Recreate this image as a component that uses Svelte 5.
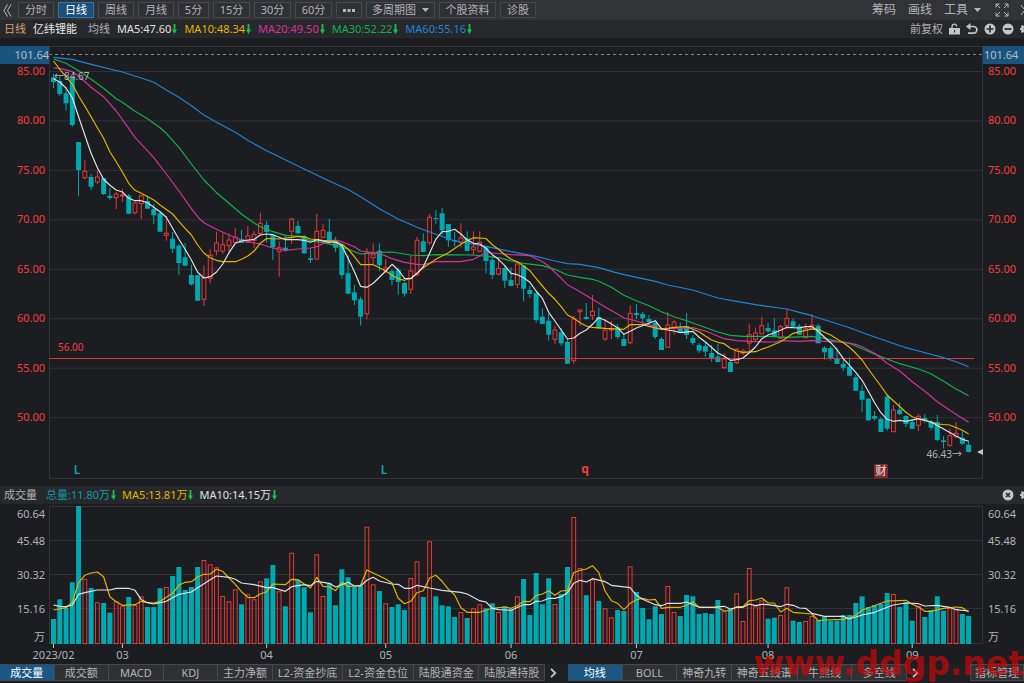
<script lang="ts">
	type Point = [number, number];

	// one row per trading day: high, body top, body bottom, low, rising, volume top
	// all in plot units, see the two viewBoxes below
	const days = [
		[74, 77.3, 82, 88, 0, 619], [76, 81, 94, 96, 0, 599.3], [87.3, 93.3, 103.3, 110.7, 0, 608],
		[76, 78.3, 125, 126.7, 0, 582.3], [142, 142, 170, 196, 0, 506], [160, 171.3, 177.7, 179.3, 1, 579],
		[174, 177, 186.7, 190, 0, 588], [170.7, 177, 182, 184, 1, 602.3], [178, 178, 194, 195, 0, 603],
		[188, 195.7, 198, 199.7, 0, 612.7], [191.7, 194, 197.7, 209, 1, 601.3], [189, 195, 196, 202, 1, 605.7],
		[194, 195.7, 213.7, 214, 0, 597], [201, 203, 212.7, 214.7, 1, 605], [195, 195.7, 203.7, 219, 1, 596.3],
		[195.7, 201, 208.7, 208.7, 0, 607], [204, 209, 215.3, 224, 0, 607], [212, 213.3, 231.7, 232, 0, 588.3],
		[216, 233.3, 235.3, 240.7, 1, 587], [232, 238.7, 248.7, 253, 0, 576], [244, 245.7, 263, 274.7, 0, 567],
		[243.3, 257.3, 265.7, 266, 0, 590], [264.7, 275, 284.3, 285.7, 0, 587], [275, 275.3, 300.7, 301, 0, 567],
		[265.3, 278, 299.3, 306, 1, 560], [249.3, 255.3, 278.3, 283.3, 1, 564.3], [231.7, 243, 251, 255.3, 1, 567.3],
		[233.3, 244.7, 251, 254, 1, 596], [233.3, 240, 245.7, 254, 1, 601.3], [228, 237.3, 242.3, 243.3, 1, 589.3],
		[229.7, 239, 243, 243, 0, 604.3], [226, 236, 242.3, 242.3, 1, 594.3], [231, 234.3, 240.3, 248, 1, 599.3],
		[212.7, 223.3, 233.3, 235.3, 1, 581.3], [221, 225, 232, 242.7, 0, 578.3], [234, 234.7, 247.3, 260, 0, 565],
		[241.3, 247.7, 251.7, 276.7, 1, 591.3], [234.7, 247.7, 250.3, 251.7, 0, 606.3], [218, 219, 231.3, 244, 1, 552.7],
		[221, 226, 233.3, 234, 0, 580], [235, 236, 253.3, 254, 0, 587.3], [248.3, 258.3, 260, 263, 0, 612.3],
		[214, 231.3, 259, 259.3, 1, 554.3], [224, 230.3, 237.3, 238.3, 1, 596], [218.7, 231.7, 241.7, 243.3, 0, 583],
		[237, 240.3, 247.7, 252.3, 0, 605.3], [244, 244.3, 275, 278.7, 0, 569.3], [255.3, 273.3, 293.7, 293.7, 0, 577.3],
		[285, 292.3, 300.3, 305, 0, 587], [296.7, 299.3, 316.7, 325.7, 0, 586], [248.3, 253.3, 313.7, 319.3, 1, 526.7],
		[243.3, 254.3, 257.7, 264.3, 1, 584.3], [243.3, 250.7, 265.3, 271.3, 0, 591], [259.3, 268, 270, 273.3, 1, 603.3],
		[269.3, 271, 280, 285.3, 0, 607], [267.7, 270, 282, 294.7, 0, 604.3], [282, 283, 293.7, 296.7, 0, 610],
		[255, 271, 289.3, 294, 1, 578], [236.7, 240.3, 274.7, 276.7, 1, 561.3], [233.3, 241.3, 252, 252, 0, 597],
		[214, 217.3, 242.7, 245, 1, 541.3], [210, 218, 219, 224, 0, 596.3], [208, 213.3, 230.3, 235.3, 0, 605.3],
		[224, 224, 240.3, 246.7, 0, 606.3], [232, 240, 241.3, 246.7, 0, 617], [223.3, 238, 242.3, 247.3, 1, 612],
		[231.3, 238.3, 251, 251, 0, 618], [231.3, 247, 249.7, 255.3, 1, 608.3], [231.3, 242.3, 251.3, 252.3, 1, 604.3],
		[246, 246, 261, 273.3, 0, 608.3], [256.7, 260, 275, 279, 0, 603.3], [258.3, 268.3, 274, 275.7, 1, 612],
		[265.3, 268, 280.7, 288, 0, 606.3], [267.3, 280, 286, 286, 0, 609.3], [261.7, 264, 284.3, 288, 1, 596.3],
		[265, 265.7, 288.7, 301.3, 0, 579], [286, 290, 294, 297.7, 0, 615], [292, 293.3, 320, 322.7, 0, 573],
		[308.3, 316.7, 324, 324, 0, 604.3], [314, 320.7, 334.7, 340.7, 0, 578.3], [325.7, 330, 339.3, 344, 1, 604],
		[328, 332.3, 343.3, 345.7, 0, 594], [339.3, 342, 363.7, 364, 0, 567], [316, 319, 360.7, 363.7, 1, 517],
		[309, 310, 311.7, 326, 1, 568], [303, 317, 319, 319.7, 0, 595.3], [295, 311.3, 315.7, 320, 1, 579.3],
		[307.7, 317, 328.3, 328.3, 0, 601], [319, 330, 339, 340.7, 1, 608.3], [321, 329, 330, 339, 1, 617.3],
		[324, 327.3, 337, 339, 0, 610], [334, 339, 346, 346, 0, 611], [305.3, 313.3, 342.7, 344, 1, 566.3],
		[304, 313, 315, 319, 0, 592], [312, 314, 318.3, 325.3, 0, 608], [315, 319, 322.3, 324, 0, 619.3],
		[322, 322.7, 337, 339, 0, 606.3], [337, 339, 350, 350, 0, 614], [312, 325, 347.3, 347.7, 1, 586],
		[320.3, 322, 327.7, 335, 1, 612], [322.7, 327.7, 332.7, 333, 0, 616], [313, 326, 335, 339, 0, 595],
		[335, 338, 343, 345, 0, 596.3], [343, 345, 350.7, 353, 0, 614], [343, 346, 351.7, 356.7, 0, 613],
		[345, 353, 358, 361.7, 0, 614], [344, 356.7, 362, 362, 0, 600], [353.3, 359, 367.7, 368.7, 1, 611.3],
		[360, 362, 372, 372, 0, 609], [348, 349.3, 362.7, 364, 1, 593.3], [348.7, 351, 353, 355, 1, 621],
		[323.7, 334.7, 343, 351.7, 1, 568], [327.7, 333, 339.3, 341.7, 1, 606.3], [316.7, 325.7, 333.7, 334, 1, 600.3],
		[322.7, 328, 331.3, 332.7, 0, 618.7], [318, 330.3, 336.7, 336.7, 0, 617.7], [325, 326.7, 338.3, 338.7, 1, 615],
		[309.7, 318.3, 325.7, 329.3, 1, 587.3], [318.3, 321.3, 326.7, 328, 0, 620.7], [324, 326, 334.7, 335, 0, 622],
		[323.7, 328.7, 337.7, 338, 1, 621], [314, 325.3, 329.3, 330, 1, 616], [323.7, 325.7, 343.3, 343.3, 0, 620],
		[346.3, 347.7, 352.3, 359.7, 0, 616.7], [346, 348, 358.7, 360.7, 0, 620.7], [347.7, 358.3, 364, 364, 0, 620.7],
		[359, 364, 367.7, 371, 0, 615], [357, 366.7, 375.7, 375.7, 0, 615], [375, 377.3, 390.7, 391, 0, 603],
		[385, 391, 399.7, 411.7, 0, 596.3], [398, 398.7, 420.3, 420.7, 0, 607], [411, 416, 418.7, 420.7, 0, 605],
		[417.3, 419, 432, 432, 0, 604], [394.3, 396.7, 428.7, 430.7, 0, 593], [405, 410, 431.7, 432, 1, 594],
		[402.3, 409.7, 414, 415, 0, 607], [415.3, 416, 424, 427, 0, 602], [419, 422, 428.7, 429, 0, 620.7],
		[414.3, 416.3, 425.3, 431, 1, 606], [414.3, 418, 420.7, 422.7, 0, 617], [420, 421.3, 427.7, 430.3, 0, 610],
		[415, 422, 440, 440.7, 0, 596.3], [436, 440.3, 442, 448.3, 0, 610.7], [428.7, 435.7, 445.3, 447, 1, 608],
		[422, 433.3, 436.7, 438, 1, 609], [431.3, 437.7, 443.7, 444.7, 0, 614], [440.7, 444.7, 452, 452.7, 0, 616]
	];

	// averages as [day, y] knots, straight in between
	const priceLines: { name: string; points: Point[] }[] = [
		{
			name: 'ma60',
			points: [[0, 57.3], [3, 59.3], [6, 64.3], [11, 72], [14, 78], [16, 82.3], [18, 90], [20, 97.3], [22, 105.7], [24, 115], [26, 122.3], [29, 132.3], [31, 140.3], [34, 150.7], [36, 156.7], [40, 169], [44, 181], [47, 189.5], [49, 196.7], [52, 208.7], [55, 219], [58, 227.3], [61, 234.3], [64, 241], [69, 246.3], [73, 251.7], [77, 256.3], [80, 261], [82, 263.7], [84, 264.3], [87, 267.7], [89, 271.3], [91, 274.7], [96, 281.3], [98, 285], [102, 290], [106, 298], [109, 301.3], [112, 304.7], [117, 309], [119, 312.3], [121, 315.7], [124, 321.7], [127, 327.7], [130, 334.7], [133, 341.3], [136, 347.7], [138, 351], [142, 357.7], [144, 361.7], [146, 366.7]]
		},
		{
			name: 'ma30',
			points: [[0, 59], [2, 63.3], [4, 70.7], [6, 79.3], [8, 88.3], [10, 98.7], [11, 102.3], [13, 111.3], [15, 118.7], [17, 127.7], [18, 133.3], [20, 147.3], [22, 164], [24, 180], [26, 192.7], [28, 203.3], [30, 214], [32, 223], [33, 226.7], [35, 231.7], [37, 235.3], [39, 236.3], [41, 240.7], [43, 242.7], [45, 245.3], [47, 249.3], [49, 254], [52, 252.3], [54, 252], [57, 255], [59, 255.7], [61, 254.7], [67, 255], [71, 257.7], [73, 261], [75, 263.3], [78, 265.7], [80, 269.3], [82, 275], [84, 277.3], [86, 279.3], [87, 281.3], [89, 287.3], [91, 295.3], [93, 300.7], [95, 305.7], [97, 311.7], [99, 316.7], [101, 320.7], [103, 325.3], [106, 332], [108, 335.3], [110, 336.3], [114, 336.3], [117, 337.3], [121, 336.3], [123, 338.3], [125, 341.3], [127, 343.3], [129, 348.7], [131, 354], [133, 359], [135, 363.7], [138, 369], [140, 373.7], [142, 381.3], [144, 389], [146, 395.7]]
		},
		{
			name: 'ma20',
			points: [[0, 68], [1, 68.3], [3, 71.7], [4, 76], [6, 87.3], [8, 96.7], [10, 111], [12, 128.3], [13, 137.3], [16, 157.7], [18, 174], [20, 191], [22, 208.7], [23, 216.7], [24, 222.7], [26, 229.3], [28, 235], [30, 240], [32, 243], [33, 244], [35, 248], [37, 250.3], [39, 249], [41, 248], [42, 246.7], [43, 243.7], [44, 240.7], [45, 240], [46, 241.7], [48, 246.7], [49, 251], [52, 253.3], [54, 258.7], [56, 262.3], [58, 264.3], [59, 264.7], [61, 261.7], [65, 261.7], [67, 259.3], [68, 256], [69, 252.3], [70, 253], [73, 254.7], [76, 255.7], [78, 261.7], [79, 266], [80, 272.3], [81, 278.3], [82, 284.7], [84, 291.7], [86, 299.3], [88, 307], [90, 314], [91, 318], [93, 321], [95, 324.7], [97, 329], [99, 328.3], [102, 327.7], [104, 331], [107, 338.7], [109, 340.7], [112, 341.7], [115, 342], [116, 340.7], [119, 341.3], [121, 340.7], [123, 341.3], [126, 342], [128, 344.3], [129, 346.7], [131, 353.3], [133, 363.3], [135, 371], [137, 381.7], [139, 391.3], [141, 401.7], [143, 410.3], [146, 422.3]]
		},
		{
			name: 'ma10',
			points: [[0, 61], [1, 69.3], [2, 76.7], [3, 84.3], [4, 96], [5, 106], [6, 116.7], [7, 127.7], [8, 138.3], [9, 151.7], [10, 161.7], [11, 172], [12, 183.3], [13, 190.3], [14, 193.3], [16, 200], [17, 205], [19, 214], [20, 221.3], [21, 228.3], [22, 235], [23, 245], [24, 253], [25, 257.7], [26, 260.3], [27, 261.7], [29, 261.7], [30, 259.3], [31, 256], [32, 251], [33, 243.3], [34, 238.5], [36, 239], [38, 237.3], [39, 236.3], [40, 236.7], [41, 239], [43, 240.3], [45, 241.3], [46, 244.3], [47, 249], [48, 256.7], [49, 264.7], [51, 264.7], [52, 267.7], [53, 271], [54, 275.3], [55, 278.7], [56, 280.3], [57, 278.3], [58, 273.3], [59, 267.7], [61, 259.3], [63, 252.7], [65, 244.3], [66, 240.7], [67, 237.7], [69, 238.5], [70, 244.7], [71, 249.3], [72, 254.7], [73, 259.3], [74, 261.7], [75, 266], [76, 270.7], [77, 278.3], [78, 286], [79, 293.3], [80, 299.3], [81, 306.7], [82, 315], [83, 318.3], [84, 322.7], [85, 326], [86, 327.3], [88, 328.3], [91, 329.3], [92, 324.7], [94, 324.7], [95, 326.3], [97, 329.3], [99, 327.3], [101, 326.7], [103, 331.7], [104, 336], [105, 340], [106, 342.3], [107, 343.7], [108, 348.3], [109, 351], [110, 352.3], [112, 351.7], [113, 349.3], [114, 347], [116, 341.7], [117, 337.7], [118, 333.3], [120, 330.3], [121, 329], [122, 329.3], [123, 332.3], [124, 335], [125, 339], [126, 342.7], [127, 347.3], [128, 353.3], [129, 360], [130, 369], [132, 386], [133, 395], [134, 400.7], [136, 412.3], [137, 416.7], [138, 419], [139, 420.3], [140, 422.3], [141, 424], [143, 425], [145, 430.3], [146, 434]]
		},
		{
			name: 'ma5',
			points: [[0, 78.7], [1, 82], [2, 88], [3, 97.7], [4, 116.7], [5, 135], [6, 153.3], [7, 167.7], [8, 179.3], [9, 185.3], [10, 190], [11, 192], [12, 198.3], [13, 200.7], [14, 200.7], [15, 202.7], [16, 207.3], [17, 211.7], [18, 217.3], [19, 228.3], [20, 239.3], [21, 249.3], [22, 260], [23, 272.3], [24, 278], [25, 276.7], [26, 272], [27, 264], [28, 252.7], [29, 243.3], [30, 241], [32, 239.3], [33, 235], [34, 234], [35, 234.7], [37, 239.7], [39, 239.7], [40, 240.3], [41, 242.3], [42, 239.7], [44, 242.3], [45, 242], [46, 245.7], [47, 258.3], [48, 271.7], [49, 286.3], [50, 287.3], [51, 283.3], [52, 277.3], [53, 271], [54, 264.3], [55, 270], [56, 278.3], [57, 278.7], [58, 273.3], [59, 266.7], [60, 253.3], [61, 239.3], [62, 231.7], [63, 231.3], [64, 229.3], [65, 234], [66, 240], [67, 243.3], [68, 244], [69, 248.3], [70, 254.7], [71, 259.3], [72, 265.7], [73, 273.3], [74, 274.7], [75, 277.7], [76, 282.3], [77, 291], [78, 298.3], [79, 312.3], [80, 321], [81, 330], [82, 339], [83, 338], [84, 333.3], [85, 330], [86, 324.3], [87, 317.7], [88, 320.3], [89, 324], [90, 327.7], [91, 334.3], [92, 331.3], [93, 328], [95, 323.3], [96, 320.7], [97, 328.7], [98, 330], [99, 331], [100, 332.7], [102, 331.3], [103, 337.3], [104, 342], [106, 353], [107, 356.3], [108, 360.3], [109, 359.7], [110, 358], [111, 352.7], [112, 347], [113, 338.7], [114, 335], [115, 332.7], [116, 330.3], [117, 327.3], [119, 328], [120, 326.7], [121, 326.7], [122, 331.3], [123, 337.3], [124, 342.7], [125, 349.7], [126, 358.7], [127, 365.3], [128, 372.3], [129, 380.3], [130, 391.3], [131, 402.7], [132, 412.7], [133, 419.3], [134, 421.3], [135, 420.3], [136, 421.3], [138, 418.7], [140, 422], [142, 429], [144, 436], [145, 439.3], [146, 441.3]]
		}
	];

	const volumeLines: { name: string; points: Point[] }[] = [
		{
			name: 'ma10',
			points: [[0, 610], [2, 607.7], [3, 602.3], [4, 582.7], [5, 575.3], [6, 573], [7, 572], [8, 576.7], [9, 596.7], [10, 601.7], [11, 605.3], [13, 604.7], [14, 601.3], [15, 602.7], [16, 603], [17, 601.3], [18, 597.3], [19, 593.3], [20, 585.3], [21, 582.3], [22, 581.7], [23, 577], [24, 574.3], [25, 574], [26, 569.3], [27, 571.3], [28, 578], [29, 584.3], [30, 591.7], [31, 597.3], [32, 597.7], [33, 594], [34, 591.7], [35, 584], [37, 584.7], [38, 579.3], [39, 579.7], [40, 584], [41, 588], [42, 577.3], [43, 586.3], [44, 587], [45, 590.7], [46, 582.3], [47, 586.7], [49, 585.3], [50, 570], [51, 573], [53, 579], [54, 583], [55, 598.3], [56, 603.7], [57, 601.3], [58, 592.7], [59, 590.7], [60, 578], [61, 575.3], [62, 581.3], [63, 589.3], [64, 595], [65, 607.7], [66, 612.3], [68, 612.3], [70, 608.3], [72, 607], [73, 608.3], [74, 605.7], [75, 601.3], [76, 601.7], [77, 595.3], [78, 594], [79, 590.7], [80, 595.3], [81, 591], [82, 590.3], [83, 572.7], [84, 570.3], [85, 569], [86, 565.7], [87, 572.7], [88, 591], [89, 600.7], [90, 603.3], [91, 609.7], [92, 603.3], [93, 599.7], [94, 598.3], [95, 600], [96, 599.3], [97, 608.3], [98, 607.3], [100, 607.3], [101, 605.3], [102, 602], [103, 607], [106, 607.7], [107, 611], [108, 610.3], [109, 606.7], [110, 606.7], [111, 600.7], [112, 600], [113, 598], [114, 603], [115, 603], [116, 612], [117, 608.3], [118, 612.3], [121, 614], [122, 620.7], [123, 620], [126, 619.3], [127, 618], [128, 615], [129, 610.3], [130, 608], [132, 603.3], [133, 601], [136, 600.3], [137, 604.3], [138, 607], [139, 611.3], [140, 611.3], [142, 608.3], [144, 607], [145, 607.7], [146, 612]]
		},
		{
			name: 'ma5',
			points: [[0, 605], [1, 606.3], [2, 606.7], [3, 605], [4, 594.3], [5, 592.7], [7, 590], [9, 590], [10, 588.3], [12, 588.3], [13, 590.3], [14, 599.7], [15, 602.7], [16, 604], [18, 601.3], [20, 594.3], [22, 592], [23, 587.7], [25, 579.7], [26, 576], [28, 577.3], [29, 579.3], [30, 583], [32, 584.7], [34, 587.7], [35, 587.7], [37, 591.3], [38, 586.7], [40, 584.7], [41, 585.7], [42, 581.3], [44, 583.3], [45, 587], [47, 582.3], [48, 586], [49, 586], [50, 580.3], [51, 577.3], [52, 581], [54, 584], [55, 584.3], [56, 588.3], [57, 588.3], [58, 585.3], [60, 588], [62, 590.3], [65, 592.3], [66, 594], [68, 600.7], [69, 602], [70, 608.3], [71, 609.7], [73, 610.3], [75, 604.7], [76, 604.7], [77, 601.3], [78, 601], [79, 598.3], [80, 598.3], [81, 596.7], [82, 592.7], [83, 583.3], [84, 580.3], [85, 582], [86, 578.7], [88, 581.7], [89, 585.3], [92, 587.7], [93, 595.3], [94, 599.3], [96, 604.7], [97, 605.7], [98, 603.3], [100, 603.3], [101, 602], [103, 607.3], [105, 607.3], [107, 606.3], [108, 609], [109, 607.3], [110, 607.3], [111, 604], [112, 605.7], [113, 604.3], [114, 604.7], [116, 606.7], [117, 604.3], [118, 605.3], [119, 608], [120, 608.3], [121, 613.3], [123, 616.3], [126, 616.3], [127, 619], [129, 615], [131, 612.3], [133, 607.3], [134, 605], [136, 603], [138, 603.7], [139, 606], [141, 605.3], [143, 607.3], [144, 609.7], [146, 611]]
		}
	];

	const prices = ['85.00', '80.00', '75.00', '70.00', '65.00', '60.00', '55.00', '50.00'];
	const volumes = ['60.64', '45.48', '30.32', '15.16', '万'];

	const months = [
		{ day: 0, label: '2023/02' },
		{ day: 11, label: '03' },
		{ day: 34, label: '04' },
		{ day: 53, label: '05' },
		{ day: 73, label: '06' },
		{ day: 93, label: '07' },
		{ day: 114, label: '08' },
		{ day: 137, label: '09' }
	];

	const periods = [
		{ label: '分时', size: 'std' },
		{ label: '日线', size: 'std' },
		{ label: '周线', size: 'std' },
		{ label: '月线', size: 'std' },
		{ label: '5分', size: 'short' },
		{ label: '15分', size: 'mid' },
		{ label: '30分', size: 'mid' },
		{ label: '60分', size: 'mid' }
	];

	const averages = [
		{ name: 'ma5', label: 'MA5:47.60' },
		{ name: 'ma10', label: 'MA10:48.34' },
		{ name: 'ma20', label: 'MA20:49.50' },
		{ name: 'ma30', label: 'MA30:52.22' },
		{ name: 'ma60', label: 'MA60:55.16' }
	];

	const volumeStats = [
		{ name: 'total', label: '总量:11.80万' },
		{ name: 'ma10', label: 'MA5:13.81万' },
		{ name: 'ma5', label: 'MA10:14.15万' }
	];

	const indicators = ['成交量', '成交额', 'MACD', 'KDJ', '主力净额', 'L2-资金抄底', 'L2-资金仓位', '陆股通资金', '陆股通持股'];
	const overlays = ['均线', 'BOLL', '神奇九转', '神奇五线谱', '牛熊线', '多空线'];

	let period = $state('日线');
	let indicator = $state('成交量');
	let overlay = $state('均线');

	const dayX = (i: number) => 53.5 + i * 6.268;
	const px = (x: number) => `${((x - 49) / 934) * 100}%`;
	const py = (y: number) => `${((y - 46) / 433) * 100}%`;
	const line = (points: Point[]) => points.map(([i, y]) => `${dayX(i).toFixed(1)},${y}`).join(' ');
</script>

{#snippet down()}
	<svg width="5" height="10" viewBox="0 0 5 10" aria-hidden="true">
		<path d="M1.6 0h1.8v5.5H5L2.5 10 0 5.5h1.6z" fill="#12c24c" />
	</svg>
{/snippet}

{#snippet gear()}
	<svg width="4" height="12" viewBox="0 0 4 12" aria-hidden="true">
		<path d="M0 5h1.5L1 3l1.5-1 1 1H4v2.500L3 6l1 .5V9h-.5l-1 1L1 9l.5-2H0z" fill="#c4c5c7" />
	</svg>
{/snippet}

{#snippet chevron()}
	<svg width="7" height="10" viewBox="0 0 7 10" aria-hidden="true">
		<path d="M1 .8 5.3 5 1 9.2" fill="none" stroke="#c8c9cb" stroke-width="1.8" />
	</svg>
{/snippet}

<main>
	<header class="toolbar">
		<button class="plain back" aria-label="收起">
			<svg width="9" height="13" viewBox="0 0 9 13">
				<path d="M4.5.5 1 6.5l3.5 6M8 .5 4.500 6.5l3.5 6" fill="none" stroke="#b9babc" />
			</svg>
		</button>
		{#each periods as p}
			<button class="box {p.size}" class:active={period === p.label} onclick={() => (period = p.label)}>{p.label}</button>
		{/each}
		<button class="box more" aria-label="更多">
			<svg width="12" height="3" viewBox="0 0 12 3"><path d="M0 0h3v3H0zM4.5 0h3v3h-3zM9 0h3v3H9z" fill="#b4b5b8" /></svg>
		</button>
		<button class="box multi">
			多周期图
			<svg width="7" height="4" viewBox="0 0 7 4"><path d="M0 0h7L3.5 4z" fill="#b4b5b8" /></svg>
		</button>
		<button class="box info">个股资料</button>
		<button class="box std">诊股</button>

		<div class="tools">
			<button class="plain">筹码</button>
			<button class="plain">画线</button>
			<button class="plain">
				工具
				<svg width="7" height="4" viewBox="0 0 7 4"><path d="M0 0h7L3.5 4z" fill="#b4b5b8" /></svg>
			</button>
			<button class="plain expand" aria-label="全屏">
				<svg width="14" height="14" viewBox="0 0 14 14" fill="none" stroke="#b9babc">
					<path d="M1 4.500V1h3.500M1 1l4 4M9.500 1H13v3.500M13 1 9 5M1 9.500V13h3.500M1 13l4-4M13 9.500V13H9.500M13 13 9 9" />
				</svg>
			</button>
			<button class="plain" aria-label="关闭">
				<svg width="3" height="12" viewBox="0 0 3 12"><path d="M0 1l3 4M0 11l3-4" stroke="#b9babc" /></svg>
			</button>
		</div>
	</header>

	<div class="strip">
		<span class="kind">日线</span>
		<h1>亿纬锂能</h1>
		<span>均线</span>
		<div class="stats">
			{#each averages as a}
				<span class={a.name}>{a.label}{@render down()}</span>
			{/each}
		</div>
		<div class="actions">
			<button class="plain">前复权</button>
			<button class="plain" aria-label="解锁">
				<svg width="11" height="12" viewBox="0 0 11 12">
					<path d="M3 5V3.200A2.300 2.300 0 0 1 7.500 2.800V3.500" fill="none" stroke="#c4c5c7" stroke-width="1.4" />
					<path d="M0 5h11v6.500H0z" fill="#c4c5c7" />
					<path d="M5 7h1v2.500H5z" fill="#27282b" />
				</svg>
			</button>
			<button class="plain" aria-label="撤销">
				<svg width="12" height="12" viewBox="0 0 12 12">
					<path d="M3 3.500h4.500a3.300 3.300 0 0 1 0 6.700H2" fill="none" stroke="#c4c5c7" stroke-width="1.7" />
					<path d="M4.500 0v7L0 3.500z" fill="#c4c5c7" />
				</svg>
			</button>
			<button class="plain" aria-label="放大">
				<svg width="12" height="12" viewBox="0 0 12 12">
					<circle cx="6" cy="6" r="5.5" fill="#c4c5c7" />
					<path d="M6 2.500v7M2.500 6h7" stroke="#27282b" stroke-width="1.7" />
				</svg>
			</button>
			<button class="plain" aria-label="缩小">
				<svg width="12" height="12" viewBox="0 0 12 12">
					<circle cx="6" cy="6" r="5.5" fill="#c4c5c7" />
					<path d="M2.500 6h7" stroke="#27282b" stroke-width="1.7" />
				</svg>
			</button>
			<button class="plain" aria-label="设置">{@render gear()}</button>
		</div>
	</div>

	<section class="chart price">
		<div class="axis left">
			<span class="tag">101.64</span>
			{#each prices as p}<span>{p}</span>{/each}
		</div>
		<svg class="plot" role="img" aria-label="日K线">
			<svg width="100%" height="100%" viewBox="49 46 934 433" preserveAspectRatio="none">
				{#each prices as _, i}
					<line class="grid" x1="49" x2="983" y1={71.5 + i * 49.45} y2={71.5 + i * 49.45} />
				{/each}
				<line class="dash" x1="49" x2="983" y1="54.5" y2="54.5" />
				<rect class="frame" x="49.5" y="46.5" width="933" height="432" />

				{#each days as [high, top, bottom, low, rising], i}
					{@const x = dayX(i)}
					{#if rising}
						<path class="up" d="M{x} {high}V{top}M{x} {bottom}V{low}" />
						<rect class="up" x={x - 1.9} y={top} width="3.8" height={bottom - top} />
					{:else}
						<path class="fall" d="M{x} {high}V{low}" />
						<rect class="body" x={x - 2.5} y={top} width="5" height={Math.max(bottom - top, 1)} />
					{/if}
				{/each}

				<line class="alert" x1="49" x2="974" y1="358.5" y2="358.5" />
				{#each priceLines as l}
					<polyline class="avg {l.name}" points={line(l.points)} />
				{/each}
				<path d="M983 449v6l-6-3z" fill="#c4c5c7" />
			</svg>
			<text class="note" x={px(54)} y={py(80)}>←84.67</text>
			<text class="note end" x={px(962)} y={py(458)}>46.43→</text>
			<text class="limit" x={px(58)} y={py(351)}>56.00</text>
			<text class="mark" x={px(77)} y={py(474)}>L</text>
			<text class="mark" x={px(384)} y={py(474)}>L</text>
			<text class="mark ex" x={px(585)} y={py(473)}>q</text>
			<svg class="report" x={px(874)} y={py(464)} width="14" height="14">
				<rect width="14" height="14" rx="1" fill="#822a2b" />
				<text x="7" y="11">财</text>
			</svg>
		</svg>
		<div class="axis right">
			<span class="tag">101.64</span>
			{#each prices as p}<span>{p}</span>{/each}
		</div>
	</section>

	<div class="strip second">
		<span>成交量</span>
		<div class="stats">
			{#each volumeStats as v}
				<span class={v.name}>{v.label}{@render down()}</span>
			{/each}
		</div>
		<div class="actions">
			<button class="plain" aria-label="关闭指标">
				<svg width="12" height="12" viewBox="0 0 12 12">
					<circle cx="6" cy="6" r="5.5" fill="#c4c5c7" />
					<path d="m4 4 4 4M8 4 4 8" stroke="#27282b" stroke-width="1.6" />
				</svg>
			</button>
			<button class="plain" aria-label="指标设置">{@render gear()}</button>
		</div>
	</div>

	<section class="chart volume">
		<div class="axis left">
			{#each volumes as v}<span>{v}</span>{/each}
		</div>
		<svg class="plot" role="img" aria-label="成交量">
			<svg width="100%" height="100%" viewBox="49 506 934 138" preserveAspectRatio="none">
				{#each [540.5, 574.5, 608.5] as y}
					<line class="grid" x1="49" x2="983" y1={y} y2={y} />
				{/each}
				<rect class="frame" x="49.5" y="506.5" width="933" height="137" />
				{#each days as [, , , , rising, top], i}
					{#if rising}
						<rect class="up" x={dayX(i) - 1.9} y={top + 0.5} width="3.8" height={643 - top} />
					{:else}
						<rect class="body" x={dayX(i) - 2.5} y={top} width="5" height={644 - top} />
					{/if}
				{/each}
				{#each volumeLines as l}
					<polyline class="avg {l.name}" points={line(l.points)} />
				{/each}
			</svg>
		</svg>
		<div class="axis right">
			{#each volumes as v}<span>{v}</span>{/each}
		</div>
	</section>

	<svg class="dates">
		{#each months as m}
			<line x1={px(dayX(m.day))} x2={px(dayX(m.day))} y1="0" y2="4" />
			<text x={px(dayX(m.day))} y="15">{m.label}</text>
		{/each}
	</svg>

	<footer>
		<nav class="tabs indicators">
			{#each indicators as t}
				<button class:active={indicator === t} onclick={() => (indicator = t)}>{t}</button>
			{/each}
		</nav>
		<button class="plain next" aria-label="更多指标">{@render chevron()}</button>
		<nav class="tabs overlays">
			{#each overlays as t}
				<button class:active={overlay === t} onclick={() => (overlay = t)}>{t}</button>
			{/each}
		</nav>
		<button class="plain next far" aria-label="更多均线">{@render chevron()}</button>
		<button class="manage">指标管理</button>
	</footer>

	<div class="watermark">www.ddgp.net</div>
</main>

<style>
	:global(body) {
		margin: 0;
		background: #1c1d21;
	}

	main {
		position: relative;
		display: flex;
		flex-direction: column;
		min-height: 100vh;
		overflow: hidden;
		background: #1c1d21;
		color: #b1b3b6;
		font: 11px/14px 'Noto Sans', 'Noto Sans CJK SC', sans-serif;
		white-space: nowrap;
	}

	button {
		box-sizing: border-box;
		padding: 0;
		border: 0;
		background: none;
		color: inherit;
		font: inherit;
		cursor: pointer;
	}

	svg {
		display: block;
	}

	.plain {
		display: flex;
		align-items: center;
		gap: 6px;
	}

	/* top bar */
	.toolbar {
		display: flex;
		align-items: center;
		gap: 4px;
		height: 20px;
		background: #323336;
	}
	.back {
		width: 14px;
		padding-left: 3px;
	}
	.box {
		display: flex;
		align-items: center;
		justify-content: center;
		gap: 6px;
		height: 16px;
		border: 1px solid #47484b;
		background: #303134;
	}
	.box.std {
		width: 36px;
	}
	.box.short {
		width: 31px;
	}
	.box.mid {
		width: 37px;
	}
	.box.more {
		width: 26px;
	}
	.box.multi {
		width: 69px;
	}
	.box.info {
		width: 57px;
	}
	.box.active {
		border-color: #2878ab;
		background: #1b4f78;
		color: #fff;
	}
	.tools {
		display: flex;
		gap: 12px;
		margin-left: auto;
		font-size: 12px;
	}
	.expand {
		margin-left: 2px;
	}

	/* readout rows */
	.strip {
		display: flex;
		align-items: center;
		height: 18px;
		padding-left: 4px;
		background: #27282b;
	}
	.kind {
		color: #d9a066;
	}
	h1 {
		margin: 0 11px 0 7px;
		color: #e8e8e8;
		font: inherit;
	}
	.stats {
		display: flex;
		gap: 7px;
		margin-left: 7px;
	}
	.stats span {
		display: flex;
		align-items: center;
		gap: 1px;
	}
	.second .stats {
		gap: 6px;
		margin-left: 9px;
	}
	.actions {
		display: flex;
		gap: 6px;
		margin-left: auto;
	}

	.ma5 {
		color: #e0e0e0;
	}
	.ma10 {
		color: #e0b400;
	}
	.ma20 {
		color: #d6329c;
	}
	.ma30 {
		color: #14b14b;
	}
	.ma60 {
		color: #1c86d8;
	}
	.total {
		color: #0a9ba3;
	}

	/* charts */
	.chart {
		display: grid;
		grid-template-columns: 49px 1fr 41px;
	}
	.price {
		flex: 433 0 0;
		min-height: 240px;
		margin: 8px 0 7px;
	}
	.volume {
		flex: 138 0 0;
		min-height: 100px;
		margin-top: 2px;
	}
	.plot {
		width: 100%;
		height: 100%;
	}

	.axis {
		position: relative;
		display: grid;
	}
	.axis span {
		align-self: center;
	}
	.price .axis {
		grid-template-rows: repeat(8, 4fr) 3fr;
		color: #f53c3c;
	}
	.volume .axis {
		grid-template-rows: 15fr 27fr 34fr 34fr 28fr;
	}
	.volume .axis span {
		align-self: end;
	}
	.left {
		padding-right: 4px;
		text-align: right;
	}
	.right {
		padding-left: 5px;
	}
	.axis .tag {
		position: absolute;
		top: 0;
		left: 0;
		right: 0;
		background: #195480;
		color: #b8bcc0;
		line-height: 18px;
	}
	.right .tag {
		padding-left: 1px;
	}

	.grid {
		stroke: #303235;
	}
	.frame {
		fill: none;
		stroke: #323437;
	}
	.dash {
		stroke: #85878a;
		stroke-dasharray: 3 3;
	}
	.alert {
		stroke: #e03434;
	}
	.up {
		fill: none;
		stroke: #e83838;
	}
	.fall {
		stroke: #00a8b0;
	}
	.body {
		fill: #00a8b0;
	}
	.avg {
		fill: none;
		stroke: currentColor;
		stroke-width: 1.2;
		stroke-linejoin: round;
	}

	.note {
		fill: #b1b3b6;
		font-size: 10px;
	}
	.end {
		text-anchor: end;
	}
	.limit {
		fill: #f53c3c;
		font-size: 10px;
	}
	.mark {
		fill: #00a8b0;
		font-size: 12px;
		font-weight: 600;
		text-anchor: middle;
	}
	.mark.ex {
		fill: #f53c3c;
		font-weight: 700;
	}
	.report text {
		fill: #f0e6e6;
		font-size: 11px;
		text-anchor: middle;
	}

	.dates {
		width: calc(100% - 90px);
		height: 20px;
		margin-left: 49px;
		overflow: visible;
	}
	.dates line {
		stroke: #c4c5c7;
	}
	.dates text {
		fill: #b1b3b6;
		text-anchor: middle;
	}

	/* bottom tabs */
	footer {
		display: flex;
		height: 17px;
		margin-bottom: 2px;
		background: #1f2023;
	}
	.tabs {
		display: grid;
	}
	.indicators {
		flex: 545 1 0;
		grid-template-columns: repeat(5, 109fr) repeat(2, 141fr) repeat(2, 131fr);
	}
	.overlays {
		flex: 339 1 0;
		grid-template-columns: repeat(3, 109fr) 131fr repeat(2, 109fr);
	}
	.tabs button,
	.manage {
		border: 1px solid #47484b;
		border-left: 0;
		background: #303134;
	}
	.tabs .active {
		background: #1b5784;
		color: #fff;
	}
	.next {
		justify-content: center;
		width: 23px;
		padding-right: 6px;
	}
	.far {
		justify-content: flex-start;
		width: 63px;
		padding-left: 5px;
	}
	.manage {
		width: 54px;
		border-left: 1px solid #47484b;
	}

	.watermark {
		position: absolute;
		right: 0;
		bottom: 0;
		color: #c80808;
		font: bold 33px/38px 'DejaVu Sans', sans-serif;
		opacity: 0.7;
		pointer-events: none;
	}
</style>
